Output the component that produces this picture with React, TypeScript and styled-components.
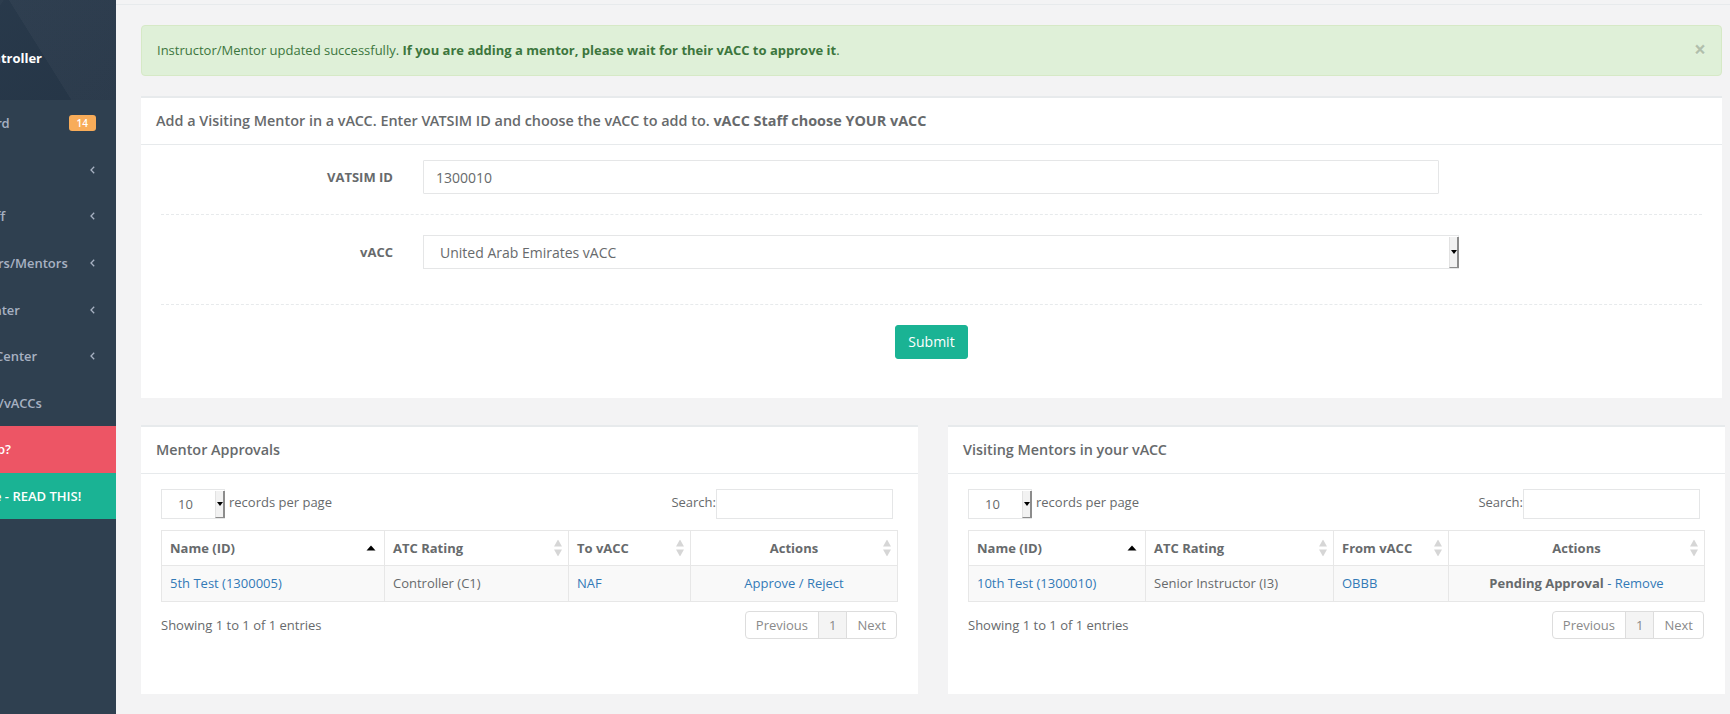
import React from "react";
import styled, { createGlobalStyle, css } from "styled-components";
import { LayoutDashboard, User, Users, GraduationCap, FileText, BookOpen, Globe, LifeBuoy, Info } from "lucide-react";

const semibold = css`
  font-family: "Open Sans SemiBold", "Open Sans Semibold", "Open Sans", "Helvetica Neue", Arial, sans-serif;
  font-weight: 600;
`;

const GlobalStyle = createGlobalStyle`
  html, body { margin: 0; padding: 0; }
  body {
    font-family: "Open Sans", "Helvetica Neue", Arial, sans-serif;
    font-size: 13px;
    color: #676a6c;
    background: #f3f3f4;
    overflow: hidden;
  }
  * { box-sizing: border-box; }
`;

const Page = styled.div`
  display: flex;
  width: 1730px;
  height: 714px;
  overflow: hidden;
`;

/* ---------- Sidebar ---------- */
const Sidebar = styled.nav`
  width: 116px;
  flex-shrink: 0;
  background: #2f4050;
  overflow: hidden;
`;

const SidebarInner = styled.div`
  width: 220px;
  margin-left: -104px;
`;

const NavHeader = styled.div`
  height: 100px;
  padding: 48px 25px 0 80px;
  background:
    linear-gradient(122deg, rgba(255,255,255,0.02) 0%, rgba(255,255,255,0.02) 38%, rgba(0,0,0,0) 38.2%),
    linear-gradient(58deg, rgba(0,0,0,0) 62%, rgba(255,255,255,0.03) 62.2%),
    linear-gradient(135deg, #2a3b4d 0%, #26364700 100%),
    #253546;
  color: #fff;
  font-weight: 700;
  font-size: 13px;
  line-height: 20px;
`;

const NavItem = styled.div<{ $variant?: "danger" | "success" }>`
  display: flex;
  align-items: center;
  height: 46.6px;
  padding: 0 20px 0 25px;
  ${semibold};
  font-size: 13px;
  color: #a7b1c2;
  white-space: nowrap;
  ${(p) =>
    p.$variant === "danger" &&
    css`
      background: #ed5565;
      color: #fff;
    `}
  ${(p) =>
    p.$variant === "success" &&
    css`
      background: #1ab394;
      color: #fff;
    `}
`;

const NavIcon = styled.span<{ $w: number }>`
  display: inline-flex;
  width: ${(p) => p.$w}px;
  margin-right: 6px;
  overflow: hidden;
`;

const NavLabel = styled.span`
  flex: 1;
`;

const NavBadge = styled.span`
  background: #f8ac59;
  color: #fff;
  font-size: 10px;
  ${semibold};
  line-height: 10px;
  padding: 3px 8px;
  border-radius: 3px;
`;

const NavArrow = styled.svg`
  width: 5px;
  height: 8px;
  margin-right: 1px;
`;

/* ---------- Main ---------- */
const Main = styled.main`
  flex: 1;
  min-width: 0;
  display: flex;
  flex-direction: column;
  background: #f3f3f4;
`;

const TopStrip = styled.div`
  height: 5px;
  border-bottom: 1px solid #e7eaec;
  flex-shrink: 0;
`;

const Content = styled.div`
  padding: 20px 8px 0 25px;
`;

const Alert = styled.div`
  display: flex;
  align-items: center;
  margin-bottom: 20px;
  padding: 15px;
  border: 1px solid #d6e9c6;
  border-radius: 4px;
  background: #dff0d8;
  color: #3c763d;
  line-height: 18.57px;
`;

const AlertText = styled.div`
  flex: 1;
`;

const CloseButton = styled.button`
  border: 0;
  background: none;
  padding: 0;
  font-family: "Open Sans", Arial, sans-serif;
  font-size: 21px;
  font-weight: 700;
  line-height: 1;
  color: #000;
  opacity: 0.2;
  text-shadow: 0 1px 0 #fff;
  margin-top: -2px;
`;

const Card = styled.section<{ $mb?: number }>`
  background: #fff;
  margin-bottom: ${(p) => p.$mb ?? 0}px;
`;

const CardTitle = styled.div`
  border-top: 2px solid #e7eaec;
  min-height: 48px;
  padding: 15px 15px 7px;
`;

const CardHeading = styled.h5`
  margin: 0 0 7px;
  font-size: 14.4px;
  ${semibold};
  line-height: 15.4px;
  color: #676a6c;
  strong {
    font-family: "Open Sans", Arial, sans-serif;
    font-weight: 700;
  }
`;

const CardBody = styled.div<{ $pb: number }>`
  border-top: 1px solid #e7eaec;
  padding: 15px 20px ${(p) => p.$pb}px;
`;

/* ---------- Form ---------- */
const Form = styled.form`
  display: flex;
  flex-direction: column;
`;

const FormRow = styled.div<{ $mb?: number }>`
  display: grid;
  grid-template-columns: 232px 1fr;
  column-gap: 30px;
  align-items: center;
  margin-bottom: ${(p) => p.$mb ?? 0}px;
`;

const FormLabel = styled.label`
  text-align: right;
  font-weight: 700;
  font-size: 13px;
  color: #676a6c;
`;

const TextInput = styled.input`
  width: 1016px;
  height: 34px;
  padding: 6px 12px;
  border: 1px solid #e5e6e7;
  border-radius: 1px;
  font-family: "Open Sans", Arial, sans-serif;
  font-size: 14px;
  color: #676a6c;
  outline: none;
`;

const DashedLine = styled.hr`
  border: 0;
  border-top: 1px dashed #e7eaec;
  height: 0;
  margin: 20px 0;
`;

const ButtonRow = styled.div`
  display: flex;
  justify-content: center;
`;

const PrimaryButton = styled.button`
  height: 34px;
  padding: 6px 12px;
  border: 1px solid #1ab394;
  border-radius: 3px;
  background: #1ab394;
  color: #fff;
  font-family: "Open Sans", Arial, sans-serif;
  font-size: 14px;
  line-height: 20px;
`;

const SelectWrap = styled.div<{ $w: number; $h: number }>`
  position: relative;
  width: ${(p) => p.$w}px;
  height: ${(p) => p.$h}px;
`;

const NativeSelect = styled.select<{ $fs: number }>`
  appearance: none;
  -webkit-appearance: none;
  width: 100%;
  height: 100%;
  border: 1px solid #e5e6e7;
  border-radius: 0;
  background: #fff;
  padding: 0 16px;
  font-family: "Open Sans", Arial, sans-serif;
  font-size: ${(p) => p.$fs}px;
  color: #676a6c;
  outline: none;
`;

const SelectArrow = styled.span`
  position: absolute;
  right: 0;
  top: 2px;
  bottom: 1px;
  width: 10px;
  background: #f2f2f2;
  border-left: 1px solid #e2e2e2;
  border-right: 2px solid #8c8c8c;
  border-bottom: 1px solid #8c8c8c;
  display: flex;
  align-items: center;
  justify-content: center;
  pointer-events: none;
  &::after {
    content: "";
    border-left: 3px solid transparent;
    border-right: 3px solid transparent;
    border-top: 4px solid #000;
  }
`;

/* ---------- Data table ---------- */
const BottomGrid = styled.div`
  display: grid;
  grid-template-columns: 1fr 1fr;
  column-gap: 30px;
`;

const Toolbar = styled.div`
  display: flex;
  justify-content: space-between;
  align-items: center;
  height: 30px;
  margin-bottom: 11px;
`;

const LengthLabel = styled.label`
  display: flex;
  align-items: center;
  gap: 4px;
`;

const LabelText = styled.span`
  margin-bottom: 4px;
`;

const SearchLabel = styled.label`
  display: flex;
  align-items: center;
  margin-right: 5px;
`;

const SearchInput = styled.input`
  width: 177px;
  height: 30px;
  border: 1px solid #e5e6e7;
  outline: none;
`;

const Table = styled.table`
  width: 100%;
  border-collapse: collapse;
  table-layout: fixed;
`;

const Th = styled.th<{ $center?: boolean }>`
  position: relative;
  padding: 8px;
  line-height: 18px;
  font-weight: 700;
  color: #676a6c;
  text-align: ${(p) => (p.$center ? "center" : "left")};
  border: 1px solid #e7e7e7;
`;

const Td = styled.td<{ $center?: boolean }>`
  padding: 8px;
  line-height: 18.57px;
  text-align: ${(p) => (p.$center ? "center" : "left")};
  border: 1px solid #e7e7e7;
  background: #f9f9f9;
  white-space: nowrap;
`;

const Link = styled.a`
  color: #337ab7;
  text-decoration: none;
`;

const Strong = styled.strong`
  font-weight: 700;
`;

const SortIcon = styled.svg<{ $right: number }>`
  position: absolute;
  right: ${(p) => p.$right}px;
  top: 50%;
  transform: translateY(-50%);
`;

const TableFooter = styled.div`
  display: flex;
  justify-content: space-between;
  align-items: center;
  margin-top: 9px;
`;

const Pager = styled.ul`
  display: flex;
  margin: 0 1px 0 0;
  padding: 0;
  list-style: none;
`;

const PageButton = styled.li<{ $active?: boolean }>`
  padding: 4px 10px;
  line-height: 18.57px;
  border: 1px solid #ddd;
  margin-left: -1px;
  color: #8a8a8a;
  background: ${(p) => (p.$active ? "#f4f4f4" : "#fff")};
  &:first-child { border-radius: 4px 0 0 4px; margin-left: 0; }
  &:last-child { border-radius: 0 4px 4px 0; }
`;

/* ---------- Pieces ---------- */
const Arrow = () => (
  <NavArrow viewBox="0 0 5 8">
    <polyline points="4.2,0.8 1,4 4.2,7.2" fill="none" stroke="#a7b1c2" strokeWidth="1.3" />
  </NavArrow>
);

const SortAsc = () => (
  <SortIcon $right={8} width="10" height="6" viewBox="0 0 10 6">
    <polygon points="5,0.5 9.5,5.5 0.5,5.5" fill="#000" />
  </SortIcon>
);

const SortBoth = () => (
  <SortIcon $right={6} width="8" height="17" viewBox="0 0 8 17">
    <polygon points="4,0 8,7 0,7" fill="#d6d6d6" />
    <polygon points="0,10 8,10 4,17" fill="#d6d6d6" />
  </SortIcon>
);

type NavEntry = {
  label: string;
  icon: React.ReactNode;
  iconWidth: number;
  badge?: string;
  arrow?: boolean;
  variant?: "danger" | "success";
};

const navEntries: NavEntry[] = [
  { label: "Dashboard", icon: <LayoutDashboard size={13} />, iconWidth: 14, badge: "14" },
  { label: "Profile", icon: <User size={13} />, iconWidth: 14, arrow: true },
  { label: "vACC Staff", icon: <Users size={13} />, iconWidth: 14, arrow: true },
  { label: "Instructors/Mentors", icon: <GraduationCap size={13} />, iconWidth: 14, arrow: true },
  { label: "Exam Center", icon: <FileText size={13} />, iconWidth: 13, arrow: true },
  { label: "Training Center", icon: <BookOpen size={13} />, iconWidth: 14, arrow: true },
  { label: "Countries/vACCs", icon: <Globe size={13} />, iconWidth: 11 },
  { label: "Need help?", icon: <LifeBuoy size={13} />, iconWidth: 14, variant: "danger" },
  { label: "Welcome - READ THIS!", icon: <Info size={13} />, iconWidth: 17, variant: "success" },
];

type Column = { title: string; width: number; sort: "asc" | "both"; center?: boolean };

type DataTableProps = {
  title: string;
  columns: Column[];
  row: React.ReactNode[];
};

const LengthSelect = () => (
  <SelectWrap $w={64} $h={30}>
    <NativeSelect $fs={13} defaultValue="10">
      <option value="10">10</option>
      <option value="25">25</option>
      <option value="50">50</option>
    </NativeSelect>
    <SelectArrow />
  </SelectWrap>
);

const DataTableCard = ({ title, columns, row }: DataTableProps) => (
  <Card>
    <CardTitle>
      <CardHeading>{title}</CardHeading>
    </CardTitle>
    <CardBody $pb={55}>
      <Toolbar>
        <LengthLabel>
          <LengthSelect />
          <LabelText>records per page</LabelText>
        </LengthLabel>
        <SearchLabel>
          <LabelText>Search:</LabelText>
          <SearchInput type="search" />
        </SearchLabel>
      </Toolbar>
      <Table>
        <colgroup>
          {columns.map((c) => (
            <col key={c.title} style={{ width: c.width }} />
          ))}
        </colgroup>
        <thead>
          <tr>
            {columns.map((c) => (
              <Th key={c.title} $center={c.center}>
                {c.title}
                {c.sort === "asc" ? <SortAsc /> : <SortBoth />}
              </Th>
            ))}
          </tr>
        </thead>
        <tbody>
          <tr>
            {row.map((cell, i) => (
              <Td key={i} $center={columns[i].center}>
                {cell}
              </Td>
            ))}
          </tr>
        </tbody>
      </Table>
      <TableFooter>
        <span>Showing 1 to 1 of 1 entries</span>
        <Pager>
          <PageButton>Previous</PageButton>
          <PageButton $active>1</PageButton>
          <PageButton>Next</PageButton>
        </Pager>
      </TableFooter>
    </CardBody>
  </Card>
);

export default function App() {
  return (
    <>
      <GlobalStyle />
      <Page>
        <Sidebar>
          <SidebarInner>
            <NavHeader>Controller</NavHeader>
            {navEntries.map((n) => (
              <NavItem key={n.label} $variant={n.variant}>
                <NavIcon $w={n.iconWidth}>{n.icon}</NavIcon>
                <NavLabel>{n.label}</NavLabel>
                {n.badge && <NavBadge>{n.badge}</NavBadge>}
                {n.arrow && <Arrow />}
              </NavItem>
            ))}
          </SidebarInner>
        </Sidebar>

        <Main>
          <TopStrip />
          <Content>
            <Alert>
              <AlertText>
                Instructor/Mentor updated successfully.{" "}
                <Strong>If you are adding a mentor, please wait for their vACC to approve it</Strong>.
              </AlertText>
              <CloseButton type="button">×</CloseButton>
            </Alert>

            <Card $mb={27}>
              <CardTitle>
                <CardHeading>
                  Add a Visiting Mentor in a vACC. Enter VATSIM ID and choose the vACC to add to.{" "}
                  <strong>vACC Staff choose YOUR vACC</strong>
                </CardHeading>
              </CardTitle>
              <CardBody $pb={39}>
                <Form onSubmit={(e) => e.preventDefault()}>
                  <FormRow>
                    <FormLabel>VATSIM ID</FormLabel>
                    <TextInput defaultValue="1300010" />
                  </FormRow>
                  <DashedLine />
                  <FormRow $mb={15}>
                    <FormLabel>vACC</FormLabel>
                    <SelectWrap $w={1036} $h={34}>
                      <NativeSelect $fs={14} defaultValue="uae">
                        <option value="uae">United Arab Emirates vACC</option>
                      </NativeSelect>
                      <SelectArrow />
                    </SelectWrap>
                  </FormRow>
                  <DashedLine />
                  <ButtonRow>
                    <PrimaryButton type="submit">Submit</PrimaryButton>
                  </ButtonRow>
                </Form>
              </CardBody>
            </Card>

            <BottomGrid>
              <DataTableCard
                title="Mentor Approvals"
                columns={[
                  { title: "Name (ID)", width: 223, sort: "asc" },
                  { title: "ATC Rating", width: 184, sort: "both" },
                  { title: "To vACC", width: 122, sort: "both" },
                  { title: "Actions", width: 207, sort: "both", center: true },
                ]}
                row={[
                  <Link href="#">5th Test (1300005)</Link>,
                  "Controller (C1)",
                  <Link href="#">NAF</Link>,
                  <Link href="#">Approve / Reject</Link>,
                ]}
              />
              <DataTableCard
                title="Visiting Mentors in your vACC"
                columns={[
                  { title: "Name (ID)", width: 177, sort: "asc" },
                  { title: "ATC Rating", width: 188, sort: "both" },
                  { title: "From vACC", width: 115, sort: "both" },
                  { title: "Actions", width: 256, sort: "both", center: true },
                ]}
                row={[
                  <Link href="#">10th Test (1300010)</Link>,
                  "Senior Instructor (I3)",
                  <Link href="#">OBBB</Link>,
                  <>
                    <Strong>Pending Approval</Strong> <Link href="#">- Remove</Link>
                  </>,
                ]}
              />
            </BottomGrid>
          </Content>
        </Main>
      </Page>
    </>
  );
}
